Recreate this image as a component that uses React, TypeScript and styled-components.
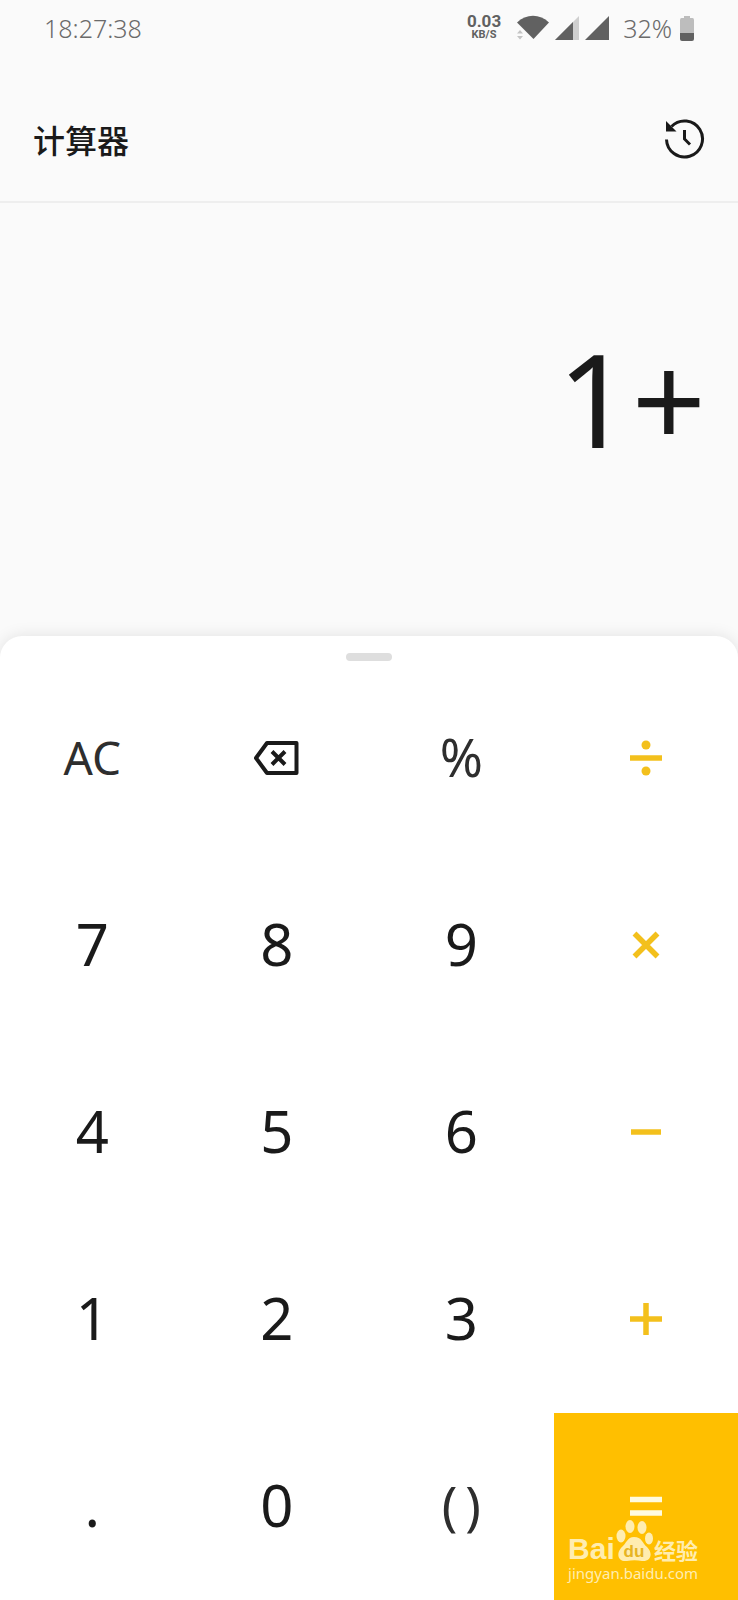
import React from "react";
import styled, { createGlobalStyle } from "styled-components";

const GlobalStyle = createGlobalStyle`
  * { box-sizing: border-box; }
  body {
    margin: 0;
    background: #fafafa;
    color: #1a1a1a;
    font-family: "Noto Sans", "Noto Sans CJK SC", sans-serif;
  }
`;

const Page = styled.div`
  display: flex;
  flex-direction: column;
  min-height: 100vh;
`;

const StatusBar = styled.div`
  display: flex;
  align-items: center;
  justify-content: space-between;
  height: 56px;
  padding: 0 44px;
  color: #6a6a6a;
  font-size: 25px;
  font-weight: 300;
`;

const StatusIcons = styled.div`
  display: flex;
  align-items: center;
  gap: 6px;
`;

const NetSpeed = styled.div`
  display: flex;
  flex-direction: column;
  align-items: center;
  margin-right: 10px;
  padding-bottom: 2px;
  color: #616161;
  font-family: Roboto, sans-serif;
  font-weight: 700;
`;

const SpeedValue = styled.span`
  font-size: 17px;
  line-height: 16px;
`;

const SpeedUnit = styled.span`
  font-size: 11px;
  line-height: 12px;
`;

const BatteryLevel = styled.span`
  margin: 0 2px 0 8px;
`;

const Header = styled.header`
  display: flex;
  align-items: center;
  justify-content: space-between;
  height: 147px;
  padding: 20px 33px 0;
  border-bottom: 2px solid #eeeeee;
`;

const Title = styled.h1`
  margin: 0;
  font-family: "Noto Sans CJK SC", sans-serif;
  font-size: 32px;
  line-height: 46px;
  font-weight: 500;
`;

const IconButton = styled.button`
  display: flex;
  padding: 0;
  border: 0;
  background: none;
  color: inherit;
`;

const Display = styled.output`
  display: flex;
  flex: 1;
  align-items: center;
  justify-content: flex-end;
  min-height: 224px;
  padding: 0 32px 44px;
  font-size: 130px;
  line-height: 180px;
`;

const Sheet = styled.main`
  position: relative;
  padding-top: 17px;
  border-radius: 22px 22px 0 0;
  background: #ffffff;
  box-shadow: 0 0 16px rgba(0, 0, 0, 0.1);
  overflow: hidden;
`;

const Handle = styled.div`
  width: 46px;
  height: 8px;
  margin: 0 auto 4px;
  border-radius: 4px;
  background: #dedede;
`;

const Keypad = styled.div`
  display: grid;
  grid-template-columns: repeat(4, 1fr);
  grid-auto-rows: 187px;
`;

type Kind = "digit" | "letters" | "symbol" | "icon" | "operator" | "equals";

const sizes: Record<Kind, number> = { digit: 58, letters: 46, symbol: 52, icon: 52, operator: 58, equals: 58 };
const colors: Record<Kind, string> = {
  digit: "#1a1a1a",
  letters: "#2e2e2e",
  symbol: "#2e2e2e",
  icon: "#1a1a1a",
  operator: "#f3c01c",
  equals: "#fffbe0",
};

const Key = styled.button<{ $kind: Kind }>`
  display: flex;
  align-items: center;
  justify-content: center;
  gap: 8px;
  padding: 0 0 ${(p) => (p.$kind === "digit" || p.$kind === "letters" || p.$kind === "symbol" ? 4 : 2)}px;
  border: 0;
  background: ${(p) => (p.$kind === "equals" ? "#ffbf00" : "transparent")};
  color: ${(p) => colors[p.$kind]};
  font-family: inherit;
  font-size: ${(p) => sizes[p.$kind]}px;
`;

const Watermark = styled.div`
  position: absolute;
  right: 40px;
  bottom: 16px;
  color: #ffedb0;
`;

const Brand = styled.div`
  display: flex;
  align-items: flex-end;
  justify-content: space-between;
  height: 42px;
`;

const BrandLatin = styled.span`
  font-family: "Liberation Sans", sans-serif;
  font-size: 30px;
  line-height: 26px;
  font-weight: 700;
`;

const BrandHan = styled.span`
  font-family: "Noto Sans CJK SC", sans-serif;
  font-size: 22px;
  line-height: 26px;
  font-weight: 700;
`;

const Site = styled.div`
  font-size: 15px;
  line-height: 22px;
`;

function WifiIcon() {
  return (
    <svg width="32" height="26" viewBox="0 0 32 26" aria-hidden="true">
      <path d="M0 7.500C9-1.500 23-1.500 32 7.500L16.500 24Z" fill="#616161" />
      <path d="M0 18.500l3-3.500 3 3.500zM0 21l3 3.500 3-3.500z" fill="#c4c4c4" />
    </svg>
  );
}

function SignalIcon({ weak }: { weak?: boolean }) {
  return (
    <svg width="24" height="24" viewBox="0 0 24 24" aria-hidden="true">
      <path d="M0 24L24 0V24Z" fill={weak ? "#cfcfcf" : "#616161"} />
      {weak && <path d="M0 24L18 6V24Z" fill="#616161" />}
    </svg>
  );
}

function BatteryIcon() {
  return (
    <svg width="14" height="25" viewBox="0 0 14 25" aria-hidden="true">
      <path d="M4 0H10V2H12.500Q14 2 14 4V17H0V4Q0 2 1.500 2H4Z" fill="#bdbdbd" />
      <path d="M0 17H14V23Q14 25 12 25H2Q0 25 0 23Z" fill="#616161" />
    </svg>
  );
}

function HistoryIcon() {
  return (
    <svg width="42" height="42" viewBox="0 0 42 42" fill="none" aria-hidden="true">
      <path d="M3.500 21.500A18 18 0 1 0 8.500 8.500" stroke="#1a1a1a" strokeWidth="3" />
      <path d="M3 3V13.500H13.500Z" fill="#1a1a1a" />
      <path d="M21.500 12V21L27 26.500" stroke="#1a1a1a" strokeWidth="3" />
    </svg>
  );
}

function BackspaceIcon() {
  return (
    <svg width="46" height="34" viewBox="0 0 46 34" fill="none" stroke="currentColor" strokeWidth="4" aria-hidden="true">
      <path d="M13 2H42.500V32H13L2 17Z" strokeLinejoin="round" />
      <path d="M18 10.500L31 23.500M31 10.500L18 23.500" />
    </svg>
  );
}

const operatorPaths: Record<string, string> = {
  "÷": "M2 18H34",
  "×": "M6.500 6.500L29.500 29.500M29.500 6.500L6.500 29.500",
  "−": "M3 18H33",
  "+": "M2 18H34M18 2V34",
  "=": "M2 11.500H34M2 25H34",
};

function OperatorIcon({ sign }: { sign: string }) {
  return (
    <svg width="36" height="36" viewBox="0 0 36 36" fill="currentColor" aria-hidden="true">
      <path d={operatorPaths[sign]} stroke="currentColor" strokeWidth="5.500" />
      {sign === "÷" && (
        <>
          <circle cx="18" cy="5" r="4.500" />
          <circle cx="18" cy="31" r="4.500" />
        </>
      )}
    </svg>
  );
}

function PawIcon() {
  return (
    <svg width="37" height="42" viewBox="0 0 37 42" fill="#ffedb0" aria-hidden="true">
      <ellipse cx="5" cy="16" rx="4.500" ry="6.500" />
      <ellipse cx="14" cy="6.500" rx="4.500" ry="6.500" />
      <ellipse cx="26" cy="7.500" rx="4.500" ry="6.500" />
      <ellipse cx="33" cy="18.500" rx="4" ry="6" />
      <path d="M18 17C26 17 26 23 31 27C38 34 34 42 26 41C21 40 16 40 11 41C2 42 0 34 5 28C11 23 11 17 18 17Z" />
      <text x="18" y="37" textAnchor="middle" fontFamily="Liberation Sans, sans-serif" fontSize="17" fontWeight="700" fill="#e6b422">
        du
      </text>
    </svg>
  );
}

const keys: { label: string; kind: Kind; content?: React.ReactNode }[] = [
  { label: "AC", kind: "letters" },
  { label: "退格", kind: "icon", content: <BackspaceIcon /> },
  { label: "%", kind: "symbol" },
  { label: "÷", kind: "operator" },
  { label: "7", kind: "digit" },
  { label: "8", kind: "digit" },
  { label: "9", kind: "digit" },
  { label: "×", kind: "operator" },
  { label: "4", kind: "digit" },
  { label: "5", kind: "digit" },
  { label: "6", kind: "digit" },
  { label: "−", kind: "operator" },
  { label: "1", kind: "digit" },
  { label: "2", kind: "digit" },
  { label: "3", kind: "digit" },
  { label: "+", kind: "operator" },
  { label: ".", kind: "digit" },
  { label: "0", kind: "digit" },
  { label: "()", kind: "symbol", content: <><span>(</span><span>)</span></> },
  { label: "=", kind: "equals" },
];

function renderKey(kind: Kind, label: string, content?: React.ReactNode) {
  if (kind === "operator" || kind === "equals") return <OperatorIcon sign={label} />;
  return content ?? label;
}

export default function App() {
  return (
    <Page>
      <GlobalStyle />
      <StatusBar>
        <span>18:27:38</span>
        <StatusIcons>
          <NetSpeed>
            <SpeedValue>0.03</SpeedValue>
            <SpeedUnit>KB/S</SpeedUnit>
          </NetSpeed>
          <WifiIcon />
          <SignalIcon weak />
          <SignalIcon />
          <BatteryLevel>32%</BatteryLevel>
          <BatteryIcon />
        </StatusIcons>
      </StatusBar>
      <Header>
        <Title>计算器</Title>
        <IconButton aria-label="历史记录">
          <HistoryIcon />
        </IconButton>
      </Header>
      <Display>1+</Display>
      <Sheet>
        <Handle />
        <Keypad>
          {keys.map((key) => (
            <Key key={key.label} $kind={key.kind} aria-label={key.label}>
              {renderKey(key.kind, key.label, key.content)}
            </Key>
          ))}
        </Keypad>
        <Watermark>
          <Brand>
            <BrandLatin>Bai</BrandLatin>
            <PawIcon />
            <BrandHan>经验</BrandHan>
          </Brand>
          <Site>jingyan.baidu.com</Site>
        </Watermark>
      </Sheet>
    </Page>
  );
}
